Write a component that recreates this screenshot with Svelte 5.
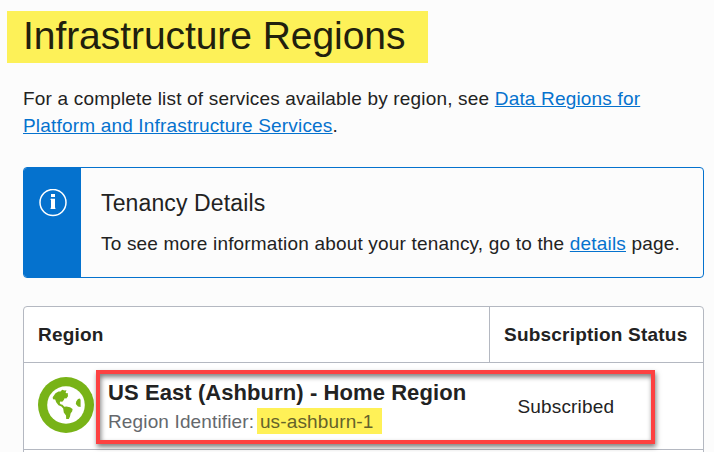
<script>
  const rows = [
    { name: 'US East (Ashburn) - Home Region', id: 'us-ashburn-1', status: 'Subscribed' }
  ];
</script>

<main>
  <h1><span>Infrastructure Regions</span></h1>
  <p class="intro">
    For a complete list of services available by region, see <a href="#regions">Data Regions for<br />Platform and Infrastructure Services</a>.
  </p>

  <section class="banner">
    <div class="strip">
      <svg width="28" height="28" viewBox="0 0 28 28" fill="none">
        <circle cx="14" cy="13.5" r="13" stroke="#fff" stroke-width="1.5" />
        <path d="M12 5h4v3h-4zM12 9.8h4v10.2h-4z" fill="#fff" />
        <path d="M11.6 9.8h1v1.2h-1zM11.6 18.8h4.8v1.2h-4.8z" fill="#fff" />
      </svg>
    </div>
    <div class="details">
      <h2>Tenancy Details</h2>
      <p>To see more information about your tenancy, go to the <a href="#details">details</a> page.</p>
    </div>
  </section>

  <div class="table">
    <div class="row head">
      <div class="cell">Region</div>
      <div class="cell status">Subscription Status</div>
    </div>
    {#each rows as row}
      <div class="row body">
        <div class="region">
          <svg width="56" height="56" viewBox="0 0 56 56">
            <circle cx="28" cy="28" r="28" fill="#78b317" />
            <circle cx="28" cy="28" r="18.8" fill="#fff" />
            <path
              fill="#78b317"
              d="M14.7 20.3L17.5 16.3L20.5 14.6L22.5 14.4L24.2 12.8L26.5 13.6L28.5 13.2L27.6 15.4L28.2 16.2L29.7 16L30 19.3L28.3 21.6L26.6 21.2L25.8 23L24.3 24.8L22.2 24.6L21.7 26L22.6 27.2L24.5 27.8L26.3 29.8L28.4 29.4L32 30.2L34.6 31.9L34.2 34.2L32.6 36.4L32 39.5L30.8 42H28.2L28 38.4L25.8 35.5L25.2 31.5L23.4 29.4L20.5 28.3L18.2 25.2L17.2 22.4L15 22.3ZM42 21.4L42.6 23V30L40 29.4L37.8 27L38.2 24.4L40 22Z"
            />
          </svg>
          <div>
            <div class="name">{row.name}</div>
            <div class="ident">Region Identifier: <mark>{row.id}</mark></div>
          </div>
        </div>
        <div class="value">{row.status}</div>
        <div class="callout"></div>
      </div>
    {/each}
  </div>
</main>

<style>
  :global(body) {
    margin: 0;
    background: #fcfcfc;
    overflow: hidden;
  }
  main {
    box-sizing: border-box;
    height: 452px;
    overflow: hidden;
    padding: 11px 10px 0 23px;
    font: 19px/27px 'Liberation Sans', Arial, sans-serif;
    letter-spacing: 0.18px;
    color: #222;
  }
  h1, h2, p {
    margin: 0;
    font-weight: 400;
  }
  h1 {
    box-sizing: border-box;
    width: 421px;
    height: 52px;
    margin-left: -16px;
    padding-left: 16px;
    background: #fdf158;
    color: #21200d;
    font-size: 39px;
    line-height: 50px;
    letter-spacing: -0.06px;
    white-space: nowrap;
  }
  .intro {
    margin-top: 22px;
    white-space: nowrap;
  }
  a {
    color: #0572ce;
    text-decoration: underline;
    text-decoration-thickness: 1px;
    text-underline-offset: 1px;
  }
  .banner {
    display: flex;
    box-sizing: border-box;
    height: 111px;
    margin-top: 28px;
    border: 1px solid #0572ce;
    border-radius: 4px;
    overflow: hidden;
  }
  .strip {
    width: 57px;
    box-sizing: border-box;
    padding: 21px 0 0 15px;
    background: #0572ce;
  }
  .details {
    padding: 21px 0 0 20px;
    white-space: nowrap;
  }
  h2 {
    font-size: 23px;
    line-height: 28px;
    letter-spacing: 0.13px;
  }
  .details p {
    margin-top: 13px;
  }
  .table {
    margin-top: 28px;
    border: 1px solid #b4b8c1;
    border-radius: 4px;
    background: #fff;
    height: 180px;
  }
  .row {
    display: grid;
    grid-template-columns: 465px 1fr;
    border-bottom: 1px solid #b4b8c1;
    white-space: nowrap;
  }
  .head {
    height: 55px;
    font-weight: 700;
    line-height: 55px;
    letter-spacing: 0.21px;
  }
  .cell {
    padding-left: 14px;
  }
  .status {
    border-left: 1px solid #b4b8c1;
  }
  .body {
    position: relative;
    height: 86px;
  }
  .region {
    display: flex;
    gap: 14px;
    padding: 14px 0 0 14px;
  }
  .name {
    margin-top: 2px;
    font-size: 22px;
    line-height: 28px;
    font-weight: 700;
    letter-spacing: 0.08px;
  }
  .ident {
    display: flex;
    line-height: 27px;
    margin-top: 1px;
    color: #65686c;
    letter-spacing: 0.14px;
    white-space: pre;
  }
  mark {
    box-sizing: border-box;
    width: 125px;
    height: 26px;
    margin-left: -3px;
    padding-left: 3.3px;
    background: #fff157;
    color: #65622a;
  }
  .value {
    padding-left: 28.4px;
    line-height: 87px;
  }
  .callout {
    position: absolute;
    left: 72px;
    top: 7px;
    width: 551px;
    height: 66px;
    border: 4px solid #fd4141;
    box-shadow: 1px 3px 5px rgba(0, 0, 0, 0.5), inset 1px 3px 5px rgba(0, 0, 0, 0.5);
  }
</style>
